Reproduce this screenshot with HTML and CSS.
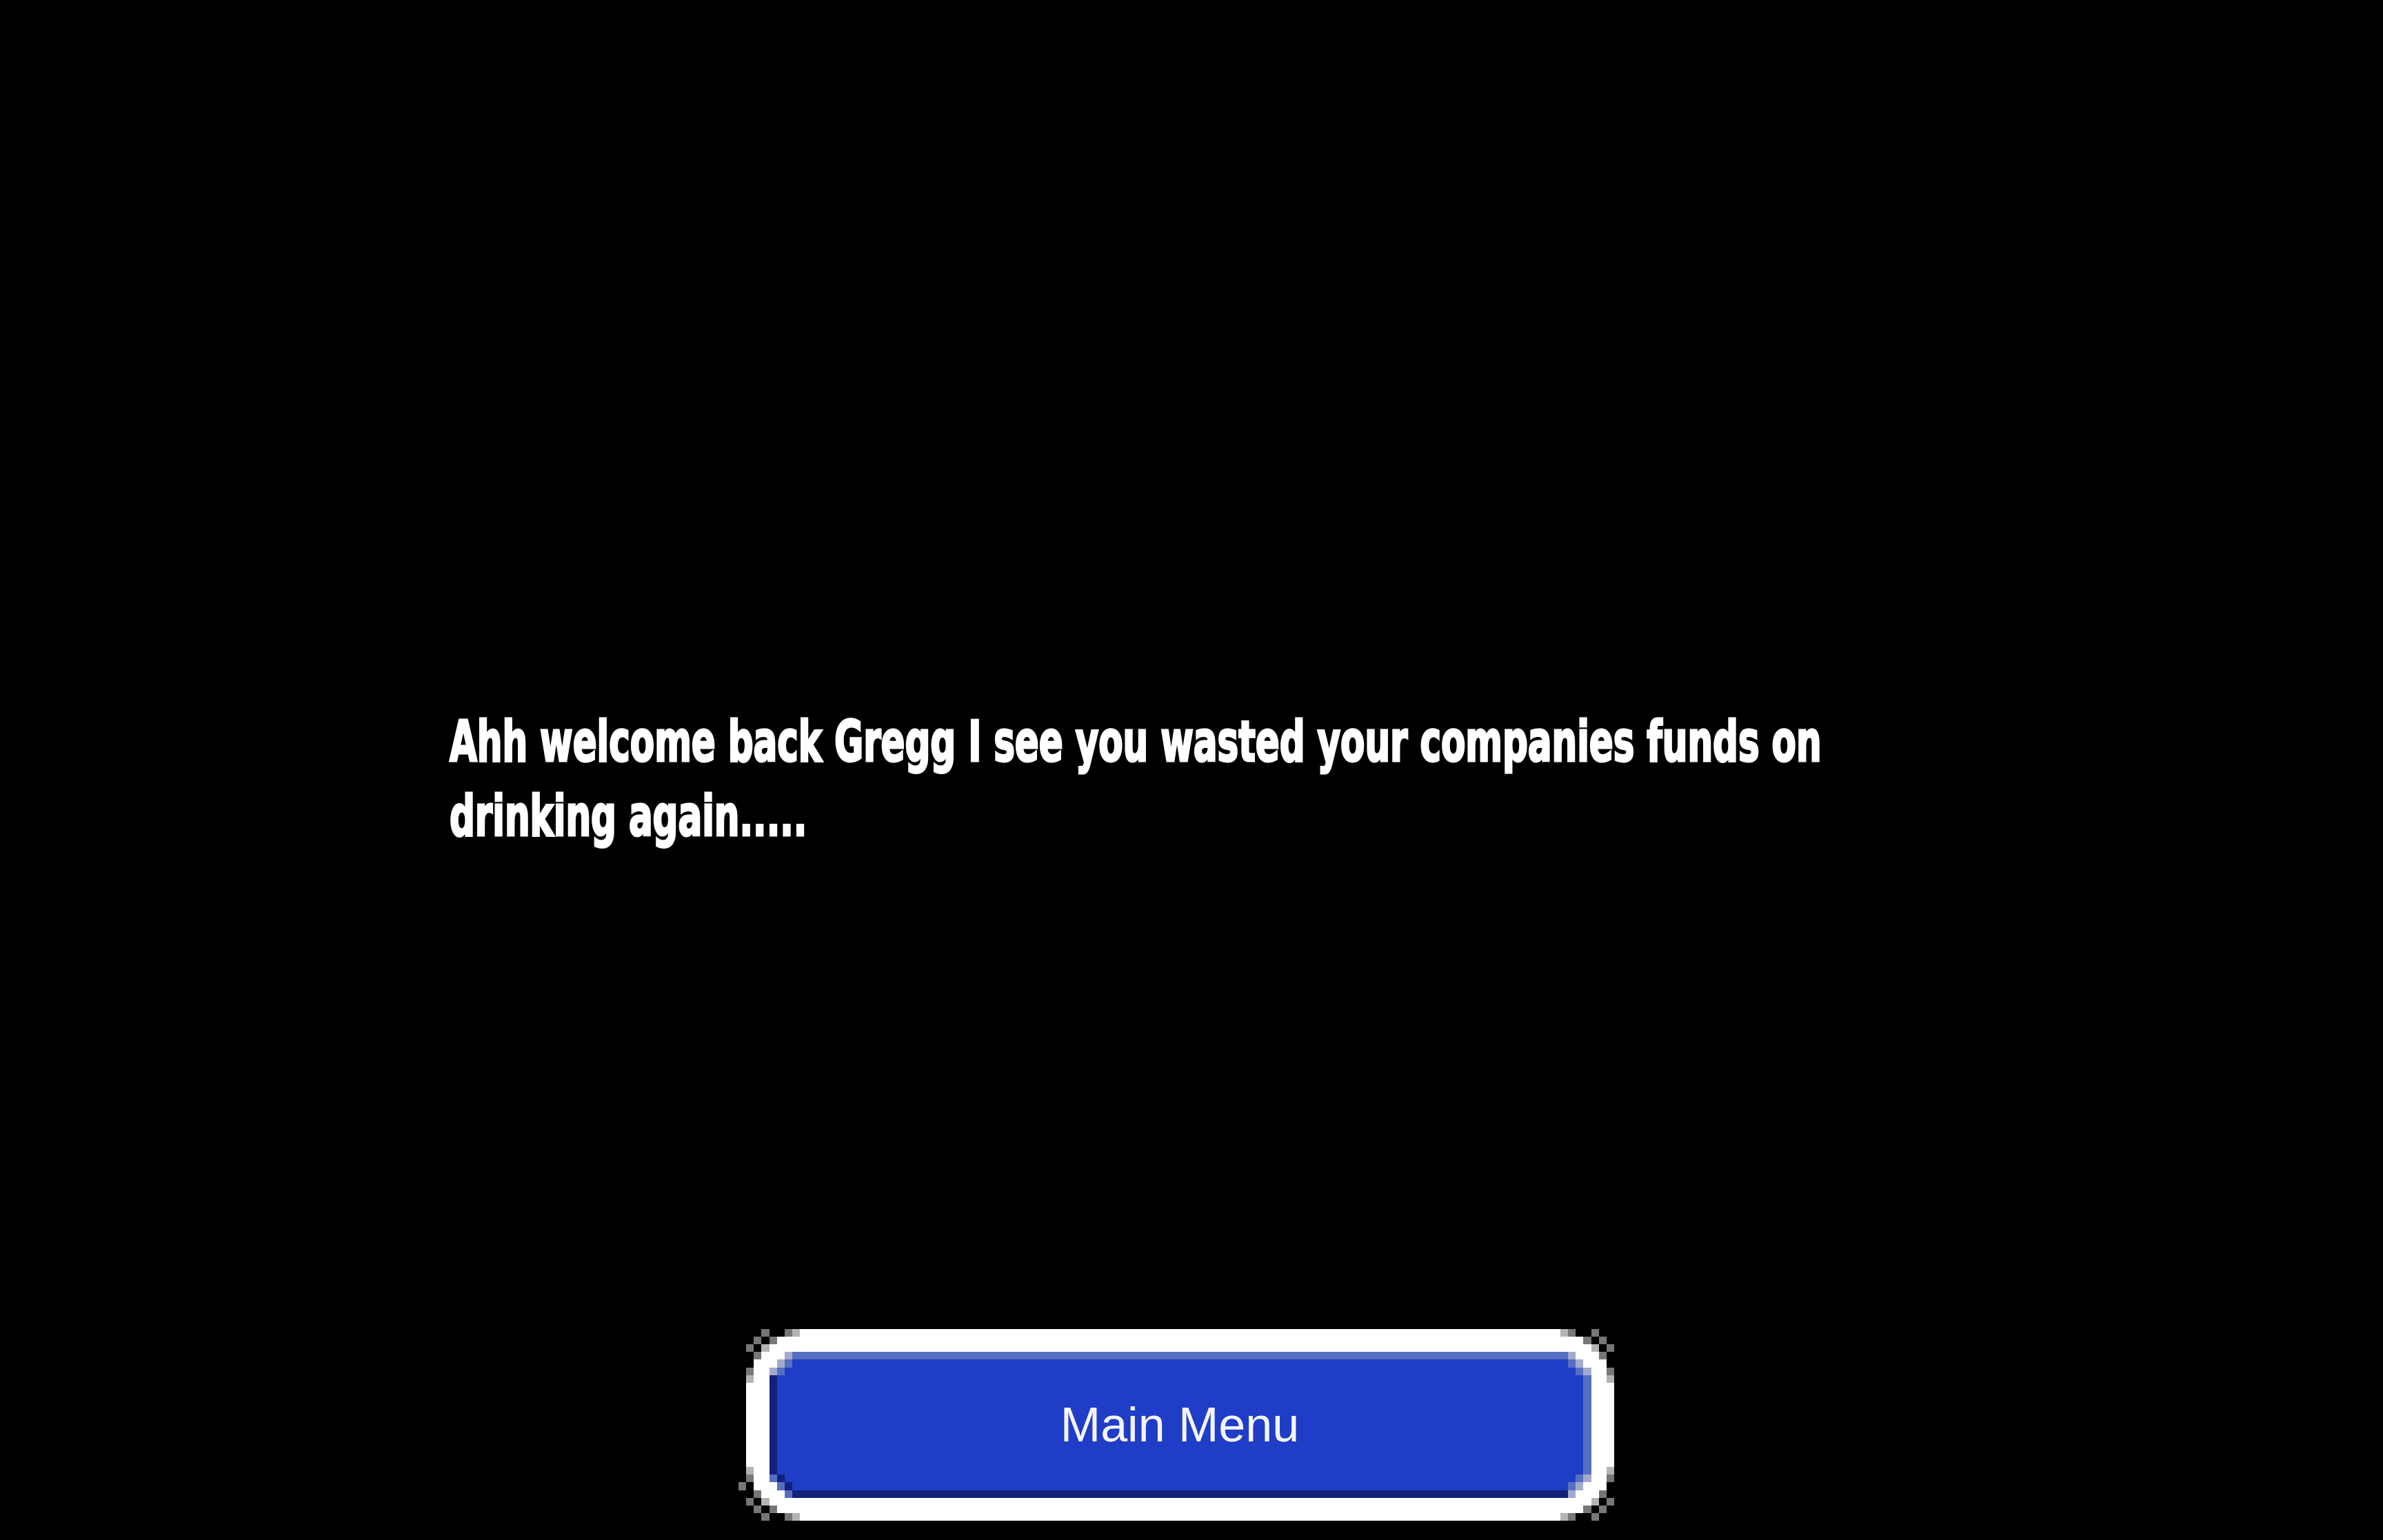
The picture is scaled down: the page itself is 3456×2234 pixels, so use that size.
FILE: index.html
```html
<!DOCTYPE html>
<html lang="en">
<head>
<meta charset="utf-8">
<title>Welcome back</title>
<link rel="stylesheet" href="styles.css">
</head>
<body>
<div class="stage">
  <div class="message">
    <p class="message-text">Ahh welcome back Gregg I see you wasted your companies funds on drinking again.....</p>
  </div>
  <div class="footer">
    <button class="menu-button" type="button">
      <svg class="menu-button-art" viewBox="0 0 114 25" preserveAspectRatio="none" shape-rendering="crispEdges" aria-hidden="true">
        <g fill="#ffffff">
          <rect x="8" y="0" width="99" height="1"/>
          <rect x="5" y="1" width="105" height="1"/>
          <rect x="4" y="2" width="107" height="1"/>
          <rect x="3" y="3" width="109" height="1"/>
          <rect x="2" y="4" width="111" height="2"/>
          <rect x="1" y="6" width="113" height="13"/>
          <rect x="2" y="19" width="111" height="2"/>
          <rect x="3" y="21" width="109" height="1"/>
          <rect x="4" y="22" width="107" height="1"/>
          <rect x="5" y="23" width="105" height="1"/>
          <rect x="8" y="24" width="99" height="1"/>
        </g>
        <g fill="#1f3dc6">
          <rect x="7" y="4" width="101" height="1"/>
          <rect x="6" y="5" width="103" height="1"/>
          <rect x="5" y="6" width="105" height="13"/>
          <rect x="6" y="19" width="103" height="1"/>
          <rect x="7" y="20" width="101" height="1"/>
        </g>
        <g fill="#566fc0">
          <rect x="7" y="3" width="101" height="1"/>
          <rect x="6" y="4" width="1" height="1"/>
          <rect x="108" y="4" width="1" height="1"/>
          <rect x="5" y="5" width="1" height="1"/>
          <rect x="109" y="5" width="1" height="1"/>
          <rect x="110" y="6" width="1" height="13"/>
          <rect x="4" y="19" width="1" height="1"/>
          <rect x="109" y="19" width="1" height="1"/>
          <rect x="5" y="20" width="1" height="1"/>
          <rect x="108" y="20" width="1" height="1"/>
          <rect x="6" y="21" width="1" height="1"/>
        </g>
        <g fill="#a3aacb">
          <rect x="6" y="3" width="1" height="1"/>
          <rect x="108" y="3" width="1" height="1"/>
          <rect x="5" y="4" width="1" height="1"/>
          <rect x="109" y="4" width="1" height="1"/>
          <rect x="4" y="5" width="1" height="1"/>
          <rect x="110" y="5" width="1" height="1"/>
          <rect x="110" y="19" width="1" height="1"/>
          <rect x="109" y="20" width="1" height="1"/>
          <rect x="108" y="21" width="1" height="1"/>
        </g>
        <g fill="#13217a">
          <rect x="4" y="6" width="1" height="13"/>
          <rect x="5" y="19" width="1" height="1"/>
          <rect x="6" y="20" width="1" height="1"/>
          <rect x="7" y="21" width="101" height="1"/>
        </g>
        <g fill="#777777">
          <rect x="3" y="0" width="1" height="1"/>
          <rect x="6" y="0" width="1" height="1"/>
          <rect x="2" y="1" width="1" height="1"/>
          <rect x="4" y="1" width="1" height="1"/>
          <rect x="1" y="2" width="1" height="1"/>
          <rect x="2" y="3" width="1" height="1"/>
          <rect x="1" y="5" width="1" height="1"/>
          <rect x="1" y="19" width="1" height="1"/>
          <rect x="0" y="20" width="1" height="1"/>
          <rect x="2" y="21" width="1" height="1"/>
          <rect x="1" y="22" width="1" height="1"/>
          <rect x="2" y="23" width="1" height="1"/>
          <rect x="4" y="23" width="1" height="1"/>
          <rect x="3" y="24" width="1" height="1"/>
          <rect x="6" y="24" width="1" height="1"/>
          <rect x="108" y="0" width="1" height="1"/>
          <rect x="111" y="0" width="1" height="1"/>
          <rect x="110" y="1" width="1" height="1"/>
          <rect x="112" y="1" width="1" height="1"/>
          <rect x="113" y="2" width="1" height="1"/>
          <rect x="112" y="3" width="1" height="1"/>
          <rect x="113" y="5" width="1" height="1"/>
          <rect x="113" y="19" width="1" height="1"/>
          <rect x="112" y="21" width="1" height="1"/>
          <rect x="113" y="22" width="1" height="1"/>
          <rect x="110" y="23" width="1" height="1"/>
          <rect x="112" y="23" width="1" height="1"/>
          <rect x="108" y="24" width="1" height="1"/>
          <rect x="111" y="24" width="1" height="1"/>
        </g>
        <g fill="#b4b4b4">
          <rect x="7" y="0" width="1" height="1"/>
          <rect x="3" y="2" width="1" height="1"/>
          <rect x="1" y="6" width="1" height="1"/>
          <rect x="1" y="18" width="1" height="1"/>
          <rect x="3" y="22" width="1" height="1"/>
          <rect x="7" y="24" width="1" height="1"/>
          <rect x="107" y="0" width="1" height="1"/>
          <rect x="111" y="2" width="1" height="1"/>
          <rect x="113" y="6" width="1" height="1"/>
          <rect x="113" y="18" width="1" height="1"/>
          <rect x="111" y="22" width="1" height="1"/>
          <rect x="107" y="24" width="1" height="1"/>
        </g>
      </svg>
      <span class="menu-button-label">Main Menu</span>
    </button>
  </div>
</div>
</body>
</html>
```
FILE: styles.css
```css
html, body {
  margin: 0;
  padding: 0;
  background: #000000;
}

.stage {
  height: 2234px;
  display: flex;
  flex-direction: column;
  background: #000000;
}

.message {
  flex: 1;
  padding: 1022px 0 0 652px;
}

/* Condensed display face: DejaVu Sans Condensed Bold, narrowed further */
.message-text {
  margin: 0;
  width: 3050px;
  color: #ffffff;
  font-family: "DejaVu Sans Condensed", "DejaVu Sans", sans-serif;
  font-stretch: condensed;
  font-weight: 700;
  font-size: 82px;
  line-height: 108px;
  -webkit-text-stroke: 3px #ffffff;
  transform: scaleX(0.698);
  transform-origin: 0 0;
}

.footer {
  display: flex;
  justify-content: flex-start;
  padding: 0 0 28px 1071px;
}

.menu-button {
  position: relative;
  width: 1270px;
  height: 278px;
  padding: 0;
  margin: 0;
  border: 0;
  background: transparent;
  display: flex;
  align-items: center;
  justify-content: center;
  cursor: pointer;
}

.menu-button-art {
  position: absolute;
  left: 0;
  top: 0;
  width: 100%;
  height: 100%;
  display: block;
}

.menu-button-label {
  position: relative;
  color: #f4f4f8;
  font-family: "Liberation Sans", Arial, sans-serif;
  font-size: 70px;
  font-weight: 400;
  line-height: 1;
  padding-left: 10px;
}
```
